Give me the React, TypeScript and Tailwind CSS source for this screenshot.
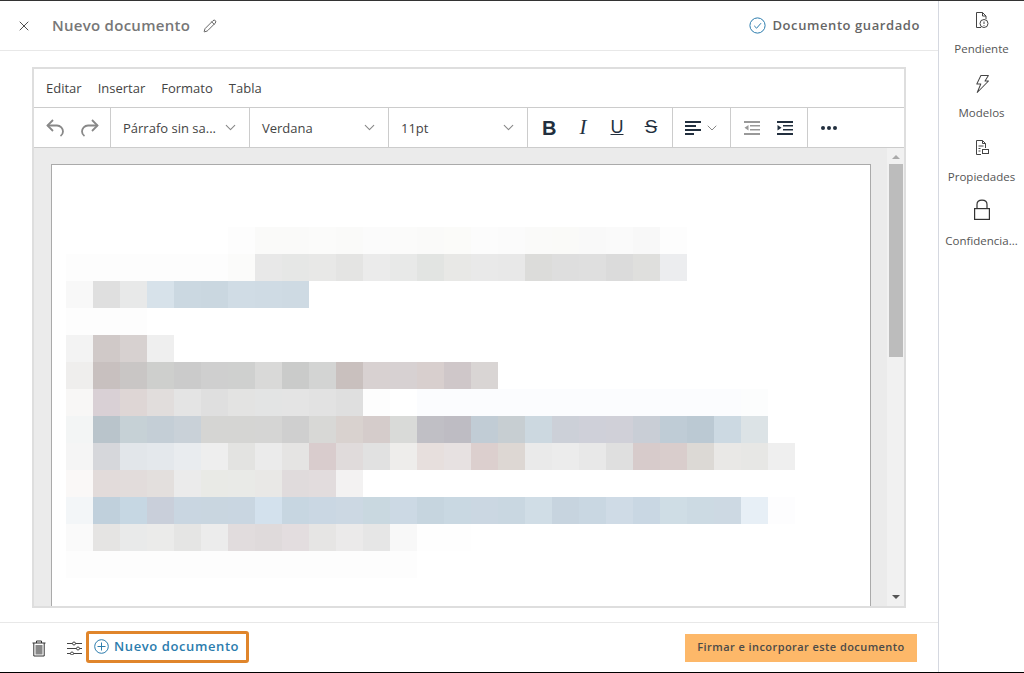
import React from 'react';
import { X, Pencil, ChevronDown } from 'lucide-react';

const W = 'transparent';

// blurred document preview, one row per 27px
const mosaic: string[][] = [
  ['', '', '', '', '', '', '#fdfdfd', '#fafaf9', '#fafaf9', '#fbfbfa', '#fafaf9', '#fbfbfb', '#fbfbfa', '#fafaf9', '#fbfbf9', '#fcfcfc', '#fbfbfb', '#fafaf9', '#fafaf8', '#f9f9f9', '#fafafa', '#f8f8f8', '#fdfdfd'],
  ['#fdfdfd', '#fdfdfd', '#fdfdfd', '#fdfdfd', '#fdfdfd', '#fdfdfd', '#fbfbfa', '#e8e8e8', '#e6e7e6', '#e8e8e7', '#e4e4e3', '#ebebeb', '#e8e9e8', '#e2e4e2', '#e8e8e6', '#e9e9e9', '#e8e8e8', '#dcdcda', '#dedede', '#dfdfdf', '#dbdbdb', '#dfdfdd', '#ecedef'],
  ['#f8f8f8', '#dfdfdf', '#e8e9e9', '#d7e2ea', '#cbd8e1', '#cad7e0', '#d0dce5', '#cfdbe4', '#cedae3'],
  ['#fdfdfd', '#fdfdfd', '#fdfdfd'],
  ['#f3f3f3', '#d0c9c8', '#d7d1d0', '#efefef'],
  ['#efeeed', '#c8c0bf', '#c9c6c5', '#cecfcd', '#cbcbcb', '#cfcfcf', '#cfd0cf', '#d9d9d8', '#cacbca', '#d3d4d3', '#c9c0be', '#d8d1d1', '#d7d1d2', '#d8cfce', '#cfc7c9', '#d9d5d4'],
  ['#f8f7f6', '#d9d0d5', '#ded6d5', '#e1dddc', '#e4e4e4', '#dfdfdf', '#e3e3e2', '#e3e4e4', '#e4e4e4', '#e2e2e2', '#dfdfdf', '#fdfdfd', W, '#fbfcfe', '#fbfcfe', '#fbfcfe', '#fbfcfe', '#fbfcfe', '#fbfcfe', '#fbfcfe', '#fbfcfe', '#fbfcfe', '#fbfcfe', '#fbfcfe', '#fbfcfe', '#fcfdfd'],
  ['#f3f5f5', '#b9c4cb', '#c6d1d6', '#c4ced6', '#c9d1d8', '#d5d5d3', '#d5d5d3', '#d5d5d4', '#cfcfcf', '#d8d8d6', '#d9d2cf', '#d5cccb', '#d9dad8', '#c0bfc5', '#bebcc3', '#c1ccd5', '#c7ced2', '#ccd8e0', '#ccd0d8', '#cfd0d9', '#d0d0d8', '#c9ced6', '#bfccd6', '#bbc9d3', '#ccd9e2', '#dce3e6'],
  ['#f5f5f5', '#d6d7db', '#e2e6ea', '#e4e8ec', '#e9ecef', '#eeeeee', '#e3e3e1', '#ebebeb', '#e5e4e3', '#d9cccd', '#e0dbdb', '#e1e1e1', '#eeedeb', '#e7dfdd', '#e7e1e1', '#dccfce', '#ddd7d3', '#eaeaea', '#ececec', '#e8e8e8', '#dfdfdf', '#d7cbcb', '#d9cdcc', '#dcd9d5', '#e9e8e6', '#e7e7e5', '#efefef'],
  ['#faf8f7', '#e2dbda', '#e2dcdb', '#e3dfdd', '#ebebeb', '#e9eae6', '#e9eae7', '#e9e8e6', '#e0dbdc', '#e2dcdd', '#f3f2f2'],
  ['#f3f6f8', '#c0d0dc', '#c6d7e3', '#c9cfda', '#c9d6e1', '#c9d6e0', '#c9d6e1', '#d3e1ed', '#c7d6e1', '#cad7e3', '#ccd8e3', '#c9d8e0', '#ccd9e4', '#c6d5df', '#c9d8e2', '#cbd7e2', '#c9d7e1', '#d0dde6', '#c7d4df', '#c9d7e2', '#cfdbe6', '#c9d7e3', '#cfdde5', '#ccdae3', '#cdd9e3', '#e7eff6', '#fdfdfe'],
  ['#fafafa', '#e5e4e3', '#e9eaea', '#ebebea', '#e5e5e4', '#ececec', '#e1dcdd', '#dfdadb', '#e3dddf', '#e6e5e4', '#ebeaea', '#e6e6e6', '#f8f8f8', '#fefefe', '#fefefe'],
  ['#fdfdfd', '#fdfdfd', '#fdfdfd', '#fdfdfd', '#fdfdfd', '#fdfdfd', '#fdfdfd', '#fdfdfd', '#fdfdfd', '#fdfdfd', '#fdfdfd', '#fdfdfd', '#fdfdfd'],
];

const UndoIcon = () => (
  <svg width="20" height="20" viewBox="0 0 20 20" fill="none" stroke="#888" strokeWidth="1.8">
    <path d="M8 2L2.5 7.5L8 13" />
    <path d="M2.5 7.5H12C15.5 7.5 18 10.5 18 13.5C18 15.5 17 17 15.5 18" />
  </svg>
);

const RedoIcon = () => (
  <svg width="20" height="20" viewBox="0 0 20 20" fill="none" stroke="#888" strokeWidth="1.8">
    <path d="M12 2L17.5 7.5L12 13" />
    <path d="M17.5 7.5H8C4.5 7.5 2 10.5 2 13.5C2 15.5 3 17 4.5 18" />
  </svg>
);

const PendingIcon = () => (
  <svg width="16" height="18" viewBox="0 0 16 18" fill="none" stroke="#444" strokeWidth="1">
    <path d="M7 16.5H2.5V1.5H8.5L12 5V8" />
    <path d="M8.5 1.5V5H12" />
    <circle cx="10" cy="12.5" r="4" fill="#fff" />
    <path d="M10 10.5V13M10 14V14.8" />
  </svg>
);

const BoltIcon = () => (
  <svg width="16" height="20" viewBox="0 0 16 20" fill="none" stroke="#444" strokeWidth="1" strokeLinejoin="round">
    <path d="M6 1.5H13.5L10.5 7H14L3.5 18.5L6.5 10H2.5Z" transform="skewX(-4) translate(1 0)" />
  </svg>
);

const PropsIcon = () => (
  <svg width="16" height="18" viewBox="0 0 16 18" fill="none" stroke="#444" strokeWidth="1">
    <path d="M7 15.5H2.5V1.5H8.5L11.5 4.5V9" />
    <path d="M8.5 1.5V4.5H11.5" />
    <path d="M4.5 7H9.5M4.5 9.5H6.5M4.5 12H6.5" />
    <rect x="8.5" y="10.5" width="6" height="4" />
  </svg>
);

const LockIcon = () => (
  <svg width="18" height="22" viewBox="0 0 18 22" fill="none" stroke="#333" strokeWidth="1.2" className="-mt-[3px]">
    <rect x="1.6" y="9.6" width="14.8" height="10.8" />
    <path d="M4 9.5V5.5C4 3 6 1.2 9 1.2C12 1.2 14 3 14 5.5V9.5" />
  </svg>
);

const SavedIcon = () => (
  <svg width="17" height="17" viewBox="0 0 17 17" fill="none" stroke="#2b7cad" strokeWidth="1">
    <circle cx="8.5" cy="8.5" r="7.6" />
    <path d="M5.2 8.8L7.6 11.2L12 6.2" />
  </svg>
);

const AlignIcon = () => (
  <svg width="16" height="14" viewBox="0 0 16 14" fill="#222f3e">
    <rect x="0" y="0" width="16" height="2" />
    <rect x="0" y="4" width="11" height="2" />
    <rect x="0" y="8" width="16" height="2" />
    <rect x="0" y="12" width="9" height="2" />
  </svg>
);

const OutdentIcon = ({ fill }: { fill: string }) => (
  <svg width="16" height="14" viewBox="0 0 16 14" fill={fill}>
    <rect x="0" y="0" width="16" height="2" />
    <rect x="6" y="4" width="10" height="1.5" />
    <rect x="6" y="8" width="10" height="1.5" />
    <rect x="0" y="12" width="16" height="2" />
    <path d="M4.5 4L0.5 6.8L4.5 9.6Z" />
  </svg>
);

const IndentIcon = ({ fill }: { fill: string }) => (
  <svg width="16" height="14" viewBox="0 0 16 14" fill={fill}>
    <rect x="0" y="0" width="16" height="2" />
    <rect x="6" y="4" width="10" height="1.5" />
    <rect x="6" y="8" width="10" height="1.5" />
    <rect x="0" y="12" width="16" height="2" />
    <path d="M0.5 4L4.5 6.8L0.5 9.6Z" />
  </svg>
);

const TrashIcon = () => (
  <svg width="14" height="17" viewBox="0 0 14 17" fill="none" stroke="#333" strokeWidth="1">
    <path d="M0.5 3H13.5M4.5 3V1H9.5V3" />
    <path d="M1.8 3V16H12.2V3" />
    <rect x="3.5" y="5" width="7" height="9.5" fill="#888" stroke="none" />
  </svg>
);

const SlidersIcon = () => (
  <svg width="15" height="14" viewBox="0 0 15 14" fill="#fff" stroke="#444" strokeWidth="1">
    <path d="M0 2.5H15M0 7.5H15M0 12.5H15" />
    <circle cx="7" cy="2.5" r="1.5" />
    <circle cx="11" cy="7.5" r="1.5" />
    <circle cx="5" cy="12.5" r="1.5" />
  </svg>
);

const PlusCircleIcon = () => (
  <svg width="15" height="15" viewBox="0 0 15 15" fill="none" stroke="#2b7cad" strokeWidth="1">
    <circle cx="7.5" cy="7.5" r="6.8" />
    <path d="M7.5 3.5V11.5M3.5 7.5H11.5" />
  </svg>
);

const SideItem = ({ icon, label }: { icon: React.ReactNode; label: string }) => (
  <div className="flex h-[64px] flex-col items-center">
    <div className="flex h-[37px] items-center justify-center">{icon}</div>
    <span className="mt-[3px] text-[11.5px] leading-[16px] text-[#555]">{label}</span>
  </div>
);

const StyleSelect = ({ label, width }: { label: string; width: string }) => (
  <div className={`flex h-full items-center justify-between border-r border-[#ccc] pl-[12px] pr-[10px] text-[13px] text-[#444] ${width}`}>
    <span className="pt-[2px]">{label}</span>
    <ChevronDown size={17} strokeWidth={1.5} className="text-[#888]" />
  </div>
);

export default function App() {
  return (
    <div className="flex h-[673px] w-[1024px] border-y border-t-[#333] border-b-black bg-white font-['Open_Sans',sans-serif]">
      <div className="flex w-[938px] flex-col">
        {/* header */}
        <div className="flex h-[50px] shrink-0 items-center border-b border-[#e8e8e8] pl-[16px] pr-[18px]">
          <X size={16} strokeWidth={1.3} className="text-[#333]" />
          <span className="ml-[20px] text-[15px] font-semibold tracking-[0.27px] text-[#777]">Nuevo documento</span>
          <Pencil size={14} strokeWidth={1.3} className="ml-[13px] text-[#333]" />
          <div className="ml-auto flex items-center">
            <SavedIcon />
            <span className="ml-[7px] text-[13px] font-semibold tracking-[0.58px] text-[#666]">Documento guardado</span>
          </div>
        </div>

        {/* editor */}
        <div className="ml-[32px] mt-[16px] flex h-[541px] w-[874px] shrink-0 flex-col border-2 border-[#dedede]">
          <div className="flex h-[39px] shrink-0 items-center gap-[16px] border-b border-[#ccc] pl-[12px] pt-[2px] text-[13px] text-[#444]">
            <span>Editar</span>
            <span>Insertar</span>
            <span>Formato</span>
            <span>Tabla</span>
          </div>
          <div className="flex h-[40px] shrink-0 items-center border-b border-[#ccc]">
            <div className="flex h-full w-[77px] items-center gap-[15px] border-r border-[#ccc] pl-[11px]">
              <UndoIcon />
              <RedoIcon />
            </div>
            <StyleSelect label="Párrafo sin sa..." width="w-[139px]" />
            <StyleSelect label="Verdana" width="w-[139px]" />
            <StyleSelect label="11pt" width="w-[139px]" />
            <div className="flex h-full w-[145px] items-center gap-[20px] border-r border-[#ccc] pl-[14px] font-['Liberation_Sans',sans-serif] text-[#222f3e]">
              <span className="w-[14px] text-center text-[20px] font-bold">B</span>
              <span className="w-[14px] text-center font-['Liberation_Serif',serif] text-[21px] italic">I</span>
              <span className="w-[14px] text-center text-[18px] underline">U</span>
              <span className="w-[14px] text-center text-[19px] line-through">S</span>
            </div>
            <div className="flex h-full w-[58px] items-center gap-[3px] border-r border-[#ccc] pl-[12px]">
              <AlignIcon />
              <ChevronDown size={16} strokeWidth={1.5} className="text-[#888]" />
            </div>
            <div className="flex h-full w-[77px] items-center gap-[17px] border-r border-[#ccc] pl-[13px]">
              <OutdentIcon fill="#999" />
              <IndentIcon fill="#222f3e" />
            </div>
            <div className="flex items-center gap-[2px] pl-[13px]">
              <span className="size-[4px] rounded-full bg-[#222f3e]" />
              <span className="size-[4px] rounded-full bg-[#222f3e]" />
              <span className="size-[4px] rounded-full bg-[#222f3e]" />
            </div>
          </div>

          {/* document area */}
          <div className="flex min-h-0 flex-1 overflow-hidden bg-[#ebebeb]">
            <div className="ml-[17px] mt-[16px] h-[500px] w-[820px] shrink-0 border border-[#aaa] border-b-0 bg-white pl-[14px] pt-[62px]">
              {mosaic.map((row, i) => (
                <div key={i} className="flex h-[27px]">
                  {row.map((c, j) => (
                    <div key={j} className="h-[27px] w-[27px]" style={{ background: c || W }} />
                  ))}
                </div>
              ))}
            </div>
            <div className="ml-[16px] flex w-[18px] flex-col items-center bg-[#f1f1f1]">
              <div className="mt-[7px] h-0 w-0 border-x-[4px] border-b-[4px] border-x-transparent border-b-[#aaa]" />
              <div className="mt-[5px] h-[193px] w-[14px] bg-[#bcbcbc]" />
              <div className="mt-auto mb-[7px] h-0 w-0 border-x-[4px] border-t-[4px] border-x-transparent border-t-[#555]" />
            </div>
          </div>
        </div>

        {/* footer */}
        <div className="mt-[14px] flex min-h-0 flex-1 items-center border-t border-[#e8e8e8] pb-[2px] pl-[32px] pr-[21px]">
          <div className="mt-[3px]">
            <TrashIcon />
          </div>
          <div className="ml-[21px] mt-[3px]">
            <SlidersIcon />
          </div>
          <button className="ml-[4px] flex h-[32px] w-[163px] items-center rounded-[3px] border-[3px] border-[#e0852b] pl-[5px]">
            <PlusCircleIcon />
            <span className="ml-[5px] text-[13px] font-semibold tracking-[0.6px] text-[#2b7cad]">Nuevo documento</span>
          </button>
          <button className="ml-auto mt-[3px] flex h-[28px] w-[232px] items-center justify-center bg-[#fdb869] pb-[1px] text-[11px] font-semibold tracking-[0.43px] text-[#4b4a48]">
            Firmar e incorporar este documento
          </button>
        </div>
      </div>

      {/* right rail */}
      <div className="flex flex-1 flex-col border-l border-[#d5d8e0]">
        <SideItem icon={<PendingIcon />} label="Pendiente" />
        <SideItem icon={<BoltIcon />} label="Modelos" />
        <SideItem icon={<PropsIcon />} label="Propiedades" />
        <SideItem icon={<LockIcon />} label="Confidencia..." />
      </div>
    </div>
  );
}
